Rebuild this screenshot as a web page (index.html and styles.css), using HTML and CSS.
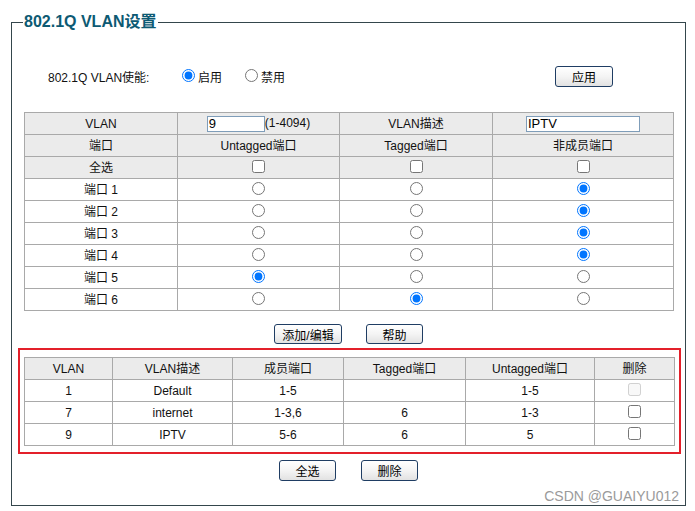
FILE: index.html
```html
<!DOCTYPE html>
<html lang="zh-CN">
<head>
<meta charset="utf-8">
<title>802.1Q VLAN设置</title>
<link rel="stylesheet" href="styles.css">
</head>
<body>
<div class="page">
  <fieldset class="panel">
    <legend class="panel-title">802.1Q VLAN设置</legend>

    <div class="enable-row">
      <span class="enable-label">802.1Q VLAN使能:</span>
      <label class="opt"><input type="radio" name="en" checked><span>启用</span></label>
      <label class="opt opt-2"><input type="radio" name="en"><span>禁用</span></label>
      <button class="btn btn-apply" type="button">应用</button>
    </div>

    <table class="grid grid-edit">
      <colgroup>
        <col class="c1"><col class="c2"><col class="c3"><col class="c4">
      </colgroup>
      <tr class="head">
        <td>VLAN</td>
        <td><input class="field field-id" type="text" value="9">(1-4094)</td>
        <td>VLAN描述</td>
        <td><input class="field field-desc" type="text" value="IPTV"></td>
      </tr>
      <tr class="head">
        <td>端口</td><td>Untagged端口</td><td>Tagged端口</td><td>非成员端口</td>
      </tr>
      <tr class="head">
        <td>全选</td>
        <td><input class="cb" type="checkbox"></td>
        <td><input class="cb" type="checkbox"></td>
        <td><input class="cb" type="checkbox"></td>
      </tr>
      <tr><td>端口 1</td><td><input class="rd" type="radio" name="p1"></td><td><input class="rd" type="radio" name="p1"></td><td><input class="rd" type="radio" name="p1" checked></td></tr>
      <tr><td>端口 2</td><td><input class="rd" type="radio" name="p2"></td><td><input class="rd" type="radio" name="p2"></td><td><input class="rd" type="radio" name="p2" checked></td></tr>
      <tr><td>端口 3</td><td><input class="rd" type="radio" name="p3"></td><td><input class="rd" type="radio" name="p3"></td><td><input class="rd" type="radio" name="p3" checked></td></tr>
      <tr><td>端口 4</td><td><input class="rd" type="radio" name="p4"></td><td><input class="rd" type="radio" name="p4"></td><td><input class="rd" type="radio" name="p4" checked></td></tr>
      <tr><td>端口 5</td><td><input class="rd" type="radio" name="p5" checked></td><td><input class="rd" type="radio" name="p5"></td><td><input class="rd" type="radio" name="p5"></td></tr>
      <tr><td>端口 6</td><td><input class="rd" type="radio" name="p6"></td><td><input class="rd" type="radio" name="p6" checked></td><td><input class="rd" type="radio" name="p6"></td></tr>
    </table>

    <div class="btn-row btn-row-edit">
      <button class="btn btn-add" type="button">添加/编辑</button>
      <button class="btn btn-help" type="button">帮助</button>
    </div>

    <div class="highlight">
      <table class="grid grid-list">
        <colgroup>
          <col class="l1"><col class="l2"><col class="l3"><col class="l4"><col class="l5"><col class="l6">
        </colgroup>
        <tr class="head">
          <td>VLAN</td><td>VLAN描述</td><td>成员端口</td><td>Tagged端口</td><td>Untagged端口</td><td>删除</td>
        </tr>
        <tr><td>1</td><td>Default</td><td>1-5</td><td></td><td>1-5</td><td><input class="cb" type="checkbox" disabled></td></tr>
        <tr><td>7</td><td>internet</td><td>1-3,6</td><td>6</td><td>1-3</td><td><input class="cb" type="checkbox"></td></tr>
        <tr><td>9</td><td>IPTV</td><td>5-6</td><td>6</td><td>5</td><td><input class="cb" type="checkbox"></td></tr>
      </table>
    </div>

    <div class="btn-row btn-row-list">
      <button class="btn btn-all" type="button">全选</button>
      <button class="btn btn-del" type="button">删除</button>
    </div>

    <span class="watermark">CSDN @GUAIYU012</span>
  </fieldset>
</div>
</body>
</html>
```

FILE: styles.css
```css
html, body {
  margin: 0;
  padding: 0;
  background: #ffffff;
}

body {
  font-family: "Liberation Sans", Arial, "Noto Sans CJK SC", sans-serif;
  font-size: 12px;
  color: #111;
}

.page {
  padding: 12px 0 0 11px;
  width: 675px;
}

.panel {
  position: relative;
  margin: 0;
  padding: 0 12px 24px 12px;
  border: 1px solid #34464c;
  width: 675px;
  box-sizing: border-box;
  min-inline-size: 0;
}

.panel-title {
  margin-left: -1px;
  padding: 0 1px;
  font-size: 16px;
  line-height: 20px;
  font-weight: bold;
  color: #0d5a73;
}

.enable-row {
  display: flex;
  align-items: center;
  height: 21px;
  margin-top: 34px;
}

.enable-label {
  width: 134px;
  padding-left: 24px;
  box-sizing: content-box;
}

.opt {
  display: flex;
  align-items: center;
  gap: 3px;
}

.opt input {
  margin: 0 0 2px 0;
  width: 13px;
  height: 13px;
}

.opt-2 {
  margin-left: 23px;
}

.btn {
  height: 21px;
  padding: 0;
  border: 1px solid #1f3d63;
  border-radius: 3px;
  background: linear-gradient(#ffffff 0%, #f4f4f4 50%, #e2e2e2 100%);
  font-family: "Liberation Sans", Arial, "Noto Sans CJK SC", sans-serif;
  font-size: 12px;
  color: #000;
  box-sizing: border-box;
}

.btn-apply {
  width: 58px;
  margin-left: auto;
  margin-right: 60px;
}

.grid {
  border-collapse: collapse;
  table-layout: fixed;
}

.grid td {
  border: 1px solid #a9a9a9;
  padding: 0;
  height: 21px;
  text-align: center;
  vertical-align: middle;
  line-height: 14px;
  white-space: nowrap;
}

.grid tr.head td {
  background: #ebebeb;
}

.grid-edit {
  width: 649px;
  margin-top: 25px;
}

.c1 { width: 153px; }
.c2 { width: 162px; }
.c3 { width: 153px; }
.c4 { width: 181px; }

.field {
  height: 16px;
  padding: 0 1px;
  margin: 0;
  border: 1px solid #7f9db9;
  font-family: "Liberation Sans", Arial, sans-serif;
  font-size: 13px;
  box-sizing: border-box;
  vertical-align: middle;
  color: #000;
}

.field-id { width: 58px; }
.field-desc { width: 114px; }

.cb, .rd {
  margin: 0;
  width: 13px;
  height: 13px;
  vertical-align: baseline;
}

.btn-row {
  display: flex;
  justify-content: center;
}

.btn-row-edit {
  margin-top: 13px;
  gap: 24px;
}

.btn-add { width: 68px; height: 20px; }
.btn-help { width: 57px; height: 20px; }

.highlight {
  margin: 4px -8px 0 -6px;
  padding: 7px 5px 6px 4px;
  border: 2px solid #e3202a;
}

.grid-list {
  width: 650px;
}

.l1 { width: 88px; }
.l2 { width: 120px; }
.l3 { width: 111px; }
.l4 { width: 122px; }
.l5 { width: 129px; }
.l6 { width: 80px; }

.btn-row-list {
  margin-top: 6px;
  gap: 25px;
}

.btn-all, .btn-del { width: 57px; }

.watermark {
  position: absolute;
  right: 6px;
  bottom: 0px;
  font-family: "Liberation Sans", Arial, sans-serif;
  font-size: 14px;
  line-height: 18px;
  color: #9a9a9a;
}
```
